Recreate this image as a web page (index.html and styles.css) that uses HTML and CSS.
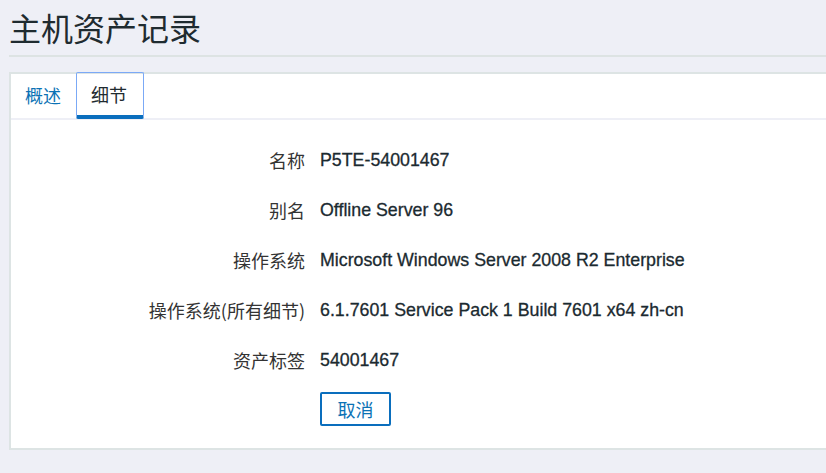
FILE: index.html
```html
<!DOCTYPE html>
<html>
<head>
	<meta charset="utf-8">
	<title>主机资产记录</title>
	<link rel="stylesheet" href="styles.css">
</head>
<body>
	<div class="page">
		<h1 class="pageTitle">主机资产记录</h1>
		<div class="panel">
			<div class="tabs">
				<a href="#" class="tab">概述</a>
				<a href="#" class="tab active">细节</a>
			</div>
			<div class="details">
				<div class="label">名称</div>
				<div class="value">P5TE-54001467</div>
				<div class="label">别名</div>
				<div class="value">Offline Server 96</div>
				<div class="label">操作系统</div>
				<div class="value">Microsoft Windows Server 2008 R2 Enterprise</div>
				<div class="label">操作系统(所有细节)</div>
				<div class="value">6.1.7601 Service Pack 1 Build 7601 x64 zh-cn</div>
				<div class="label">资产标签</div>
				<div class="value">54001467</div>
				<div class="label"></div>
				<div class="actions"><a href="#" class="cancelButton">取消</a></div>
			</div>
		</div>
	</div>
</body>
</html>
```
FILE: styles.css
```css
html, body {
	margin: 0;
	overflow: hidden;
}
body {
	background: #eeeff6;
	font-family: "Liberation Sans", "Noto Sans CJK SC", sans-serif;
	color: #1f2b30;
}
.page {
	padding-left: 9px;
	margin-right: -20px;
}
.pageTitle {
	margin: 0;
	padding: 7px 0 0 0;
	height: 48px;
	line-height: 40px;
	font-size: 32px;
	font-weight: normal;
	font-family: "Noto Sans CJK SC", sans-serif;
	border-bottom: 2px solid #dde3e3;
}
.panel {
	margin-top: 15px;
	background: white;
	border: 2px solid #dde4e4;
	height: 374px;
}
.tabs {
	display: flex;
	margin-top: -2px;
	border-bottom: 2px solid #eeeff6;
	height: 46px;
}
.tab {
	display: block;
	padding: 0 15px 0 14px;
	line-height: 47px;
	height: 46px;
	box-sizing: border-box;
	font-size: 18px;
	font-family: "Noto Sans CJK SC", sans-serif;
	color: #0b72b5;
	text-decoration: none;
}
.tab.active {
	padding: 0 16px 0 14px;
	color: #1f2b30;
	border: 1px solid #7ba9f6;
	border-bottom: 4px solid #0a6ebd;
	border-radius: 2px;
	line-height: 43px;
	height: 47px;
}
.details {
	display: grid;
	grid-template-columns: 294px 1fr;
	column-gap: 15px;
	grid-auto-rows: 50px;
	padding-top: 15px;
}
.label {
	text-align: right;
	font-size: 18px;
	line-height: 50px;
	color: #333;
	font-family: "Noto Sans CJK SC", sans-serif;
}
.value {
	font-size: 17.8px;
	line-height: 50px;
	color: #1b2a30;
	-webkit-text-stroke: 0.3px #1b2a30;
}
.actions {
	padding-top: 7px;
}
.cancelButton {
	display: inline-block;
	width: 67px;
	height: 30px;
	line-height: 30px;
	text-align: center;
	border: 2px solid #0a6ebd;
	border-radius: 2px;
	color: #0b72b5;
	text-decoration: none;
	font-size: 18px;
	font-family: "Noto Sans CJK SC", sans-serif;
}
```
